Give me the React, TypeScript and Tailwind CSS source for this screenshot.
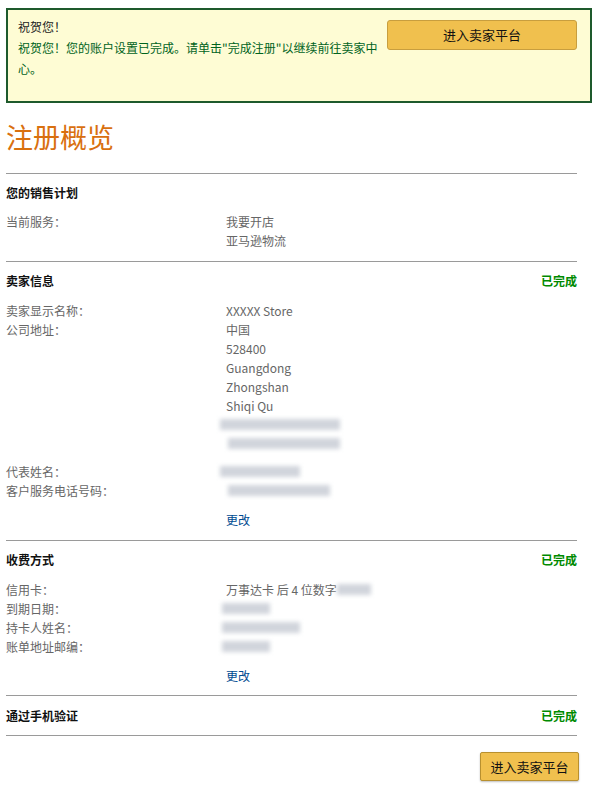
import React from "react";

const font = {
  fontFamily: '"Noto Sans CJK SC", "Noto Sans", Roboto, sans-serif',
};

// blurred (redacted) value
function Blur({ className = "" }: { className?: string }) {
  return (
    <div className={`relative h-[19px] ${className}`}>
      <div className="absolute inset-x-0 top-[4px] h-[11px] bg-gray-300 blur-[2px]" />
    </div>
  );
}

function Row({ label, children }: { label?: string; children: React.ReactNode }) {
  return (
    <div className="flex leading-[19px]">
      <div className="w-[220px] text-[#666]">{label}</div>
      <div className="flex-1 text-[#666]">{children}</div>
    </div>
  );
}

function SectionHead({ title, done = false }: { title: string; done?: boolean }) {
  return (
    <div className="flex items-center justify-between leading-[20px]">
      <span className="font-bold text-[#111]">{title}</span>
      {done && <span className="font-bold text-[#008a00]">已完成</span>}
    </div>
  );
}

function Edit() {
  return (
    <div className="flex leading-[19px]">
      <div className="w-[220px]" />
      <a className="text-[#004b91]">更改</a>
    </div>
  );
}

export default function App() {
  return (
    <div className="w-[597px] h-[797px] bg-white text-[12px]" style={font}>
      <div className="pt-[8px] pl-[6px] pr-[5px]">
        {/* banner */}
        <div className="flex h-[95px] border-2 border-[#1e5a2c] bg-[#fefcd4] pl-[10px] pr-[13px] pt-[10px]">
          <div className="w-[360px] leading-[21px] -mt-[4px]">
            <div className="text-[#222]">祝贺您！</div>
            <div className="text-[#00631d]">
              祝贺您！您的账户设置已完成。请单击"完成注册"以继续前往卖家中心。
            </div>
          </div>
          <div className="ml-auto">
            <button className="w-[190px] h-[30px] rounded-[3px] border border-[#c89e3e] bg-[#f0c04e] text-[#111] text-[13px]">
              进入卖家平台
            </button>
          </div>
        </div>
      </div>

      <div className="pl-[6px] w-[577px]">
        <h1 className="text-[27px] leading-[34px] text-[#d9700f] mt-[17px]">注册概览</h1>

        <div className="mt-[19px] border-t border-[#9a9a9a]" />
        <div className="pt-[9px] pb-[11px]">
          <SectionHead title="您的销售计划" />
          <div className="mt-[9px]">
            <Row label="当前服务：">
              <div>我要开店</div>
              <div>亚马逊物流</div>
            </Row>
          </div>
        </div>

        <div className="border-t border-[#9a9a9a]" />
        <div className="pt-[9px] pb-[11px]">
          <SectionHead title="卖家信息" done />
          <div className="mt-[10px]">
            <Row label="卖家显示名称：">XXXXX Store</Row>
            <Row label="公司地址：">
              <div>中国</div>
              <div>528400</div>
              <div>Guangdong</div>
              <div>Zhongshan</div>
              <div>Shiqi Qu</div>
              <Blur className="w-[120px] -ml-[6px]" />
              <Blur className="w-[112px] ml-[2px]" />
            </Row>
            <div className="mt-[9px]">
              <Row label="代表姓名：">
                <Blur className="w-[80px] -ml-[6px]" />
              </Row>
              <Row label="客户服务电话号码：">
                <Blur className="w-[102px] ml-[2px]" />
              </Row>
            </div>
            <div className="mt-[10px]">
              <Edit />
            </div>
          </div>
        </div>

        <div className="border-t border-[#9a9a9a]" />
        <div className="pt-[9px] pb-[10px]">
          <SectionHead title="收费方式" done />
          <div className="mt-[10px]">
            <Row label="信用卡：">
              <div className="flex items-center">
                <span>万事达卡 后 4 位数字</span>
                <Blur className="w-[34px]" />
              </div>
            </Row>
            <Row label="到期日期：">
              <Blur className="w-[48px] -ml-[4px]" />
            </Row>
            <Row label="持卡人姓名：">
              <Blur className="w-[78px] -ml-[4px]" />
            </Row>
            <Row label="账单地址邮编：">
              <Blur className="w-[48px] -ml-[4px]" />
            </Row>
            <div className="mt-[10px]">
              <Edit />
            </div>
          </div>
        </div>

        <div className="border-t border-[#9a9a9a]" />
        <div className="pt-[10px] pb-[9px]">
          <SectionHead title="通过手机验证" done />
        </div>
        <div className="border-t border-[#9a9a9a]" />

        <div className="flex justify-end mt-[16px] -mr-[2px]">
          <button className="w-[99px] h-[29px] rounded-[2px] border border-[#b8902f] bg-[#f0c04e] text-[#111] text-[13px] shadow-[0_1px_2px_rgba(0,0,0,0.25)]">
            进入卖家平台
          </button>
        </div>
      </div>
    </div>
  );
}
